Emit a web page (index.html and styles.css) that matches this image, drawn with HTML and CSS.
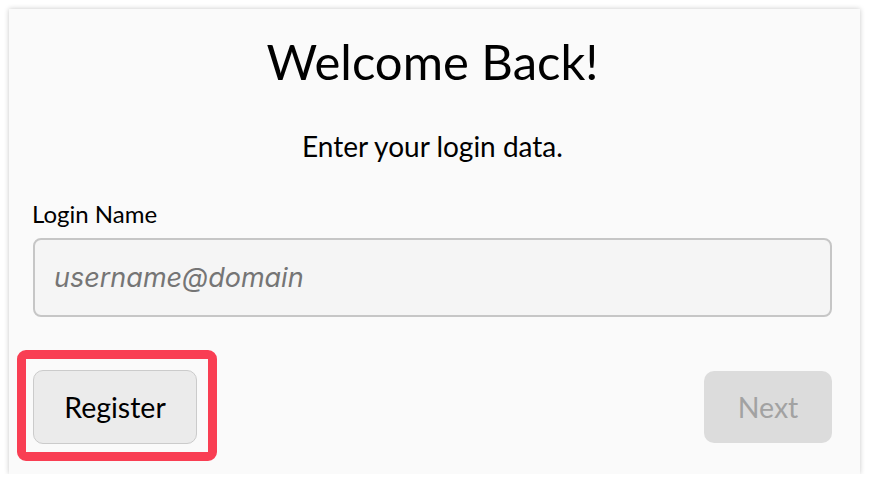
FILE: index.html
```html
<!DOCTYPE html>
<html>
<head>
<meta charset="utf-8">
<link rel="stylesheet" href="styles.css">
</head>
<body>
<div class="card">
  <h1 class="title">Welcome Back!</h1>
  <p class="subtitle">Enter your login data.</p>
  <label class="label" for="login">Login Name</label>
  <input class="input" id="login" type="text" placeholder="username@domain">
  <div class="actions">
    <button class="btn btn-register">Register</button>
    <button class="btn btn-next" disabled>Next</button>
  </div>
</div>
</body>
</html>
```

FILE: styles.css
```css
html, body {
  margin: 0;
  padding: 0;
  background: #ffffff;
}
body {
  font-family: Lato, "Noto Sans", sans-serif;
  color: #000;
}
.card {
  margin: 9px 0 0 9px;
  width: 851px;
  height: 465px;
  box-sizing: border-box;
  padding: 0 28px 0 24px;
  background: #fafafa;
  box-shadow: 0 0 5px rgba(0, 0, 0, 0.22);
  display: flex;
  flex-direction: column;
}
.title {
  margin: 23px 0 0;
  font-size: 49px;
  font-weight: 400;
  line-height: 59px;
  text-align: center;
}
.subtitle {
  margin: 38px 0 0;
  font-size: 28px;
  line-height: 34px;
  text-align: center;
}
.label {
  margin-top: 36px;
  font-size: 24px;
  line-height: 29px;
  margin-left: -1px;
}
.input {
  margin-top: 10px;
  height: 79px;
  box-sizing: border-box;
  border: 2px solid #c6c6c6;
  border-radius: 8px;
  background: #f5f5f5;
  padding: 0 19px;
  font-family: Inter, "Noto Sans", sans-serif;
  font-style: italic;
  font-size: 27px;
  outline: none;
  width: 799px;
}
.input::placeholder {
  color: #757575;
}
.actions {
  margin-top: 53px;
  display: flex;
  justify-content: space-between;
  align-items: center;
}
.btn {
  font-family: Lato, "Noto Sans", sans-serif;
  font-size: 28.5px;
  border-radius: 10px;
  padding: 0;
}
.btn-register {
  position: relative;
  width: 164px;
  height: 74px;
  background: #ebebeb;
  border: 1.5px solid #cbcbcb;
  color: #000;
}
.btn-register::after {
  content: "";
  position: absolute;
  top: -21px;
  left: -17px;
  right: -21px;
  bottom: -18px;
  border: 9px solid #f93e53;
  border-radius: 9px;
  pointer-events: none;
}
.btn-next {
  width: 128px;
  height: 72px;
  background: #dcdcdc;
  border: none;
  color: #a2a2a2;
}
```
